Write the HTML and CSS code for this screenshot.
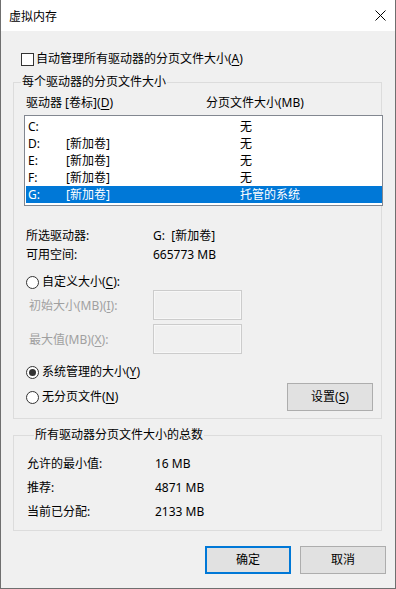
FILE: index.html
```html
<!DOCTYPE html>
<html lang="zh-CN">
<head>
    <meta charset="UTF-8">
    <meta name="viewport" content="width=device-width, initial-scale=1.0">
    <title>虚拟内存</title>
    <link rel="stylesheet" href="styles.css">
</head>
<body>
    <div class="window">
        <div class="titlebar">
            <span class="title">虚拟内存</span>
            <svg class="close" width="11" height="11" viewBox="0 0 11 11">
                <path d="M0.5 0.5 L10.5 10.5 M10.5 0.5 L0.5 10.5" stroke="#000" stroke-width="1" fill="none"/>
            </svg>
        </div>
        <div class="content">
            <div class="check-row">
                <span class="checkbox"></span>
                <span>自动管理所有驱动器的分页文件大小(<u>A</u>)</span>
            </div>

            <fieldset class="group group-drives">
                <legend>每个驱动器的分页文件大小</legend>
                <div class="list-head">
                    <span>驱动器 [卷标](<u>D</u>)</span>
                    <span>分页文件大小(MB)</span>
                </div>
                <div class="listbox">
                    <div class="list-row"><span>C:</span><span></span><span>无</span></div>
                    <div class="list-row"><span>D:</span><span>[新加卷]</span><span>无</span></div>
                    <div class="list-row"><span>E:</span><span>[新加卷]</span><span>无</span></div>
                    <div class="list-row"><span>F:</span><span>[新加卷]</span><span>无</span></div>
                    <div class="list-row selected"><span>G:</span><span>[新加卷]</span><span>托管的系统</span></div>
                </div>

                <div class="info">
                    <div class="info-row"><span>所选驱动器:</span><span>G:&nbsp;&nbsp;[新加卷]</span></div>
                    <div class="info-row"><span>可用空间:</span><span>665773 MB</span></div>
                </div>

                <div class="radio-row first">
                    <span class="radio"></span>
                    <span>自定义大小(<u>C</u>):</span>
                </div>
                <div class="size-row">
                    <span class="disabled">初始大小(MB)(<u>I</u>):</span>
                    <span class="textbox"></span>
                </div>
                <div class="size-row second">
                    <span class="disabled">最大值(MB)(<u>X</u>):</span>
                    <span class="textbox"></span>
                </div>

                <div class="radio-row managed">
                    <span class="radio checked"></span>
                    <span>系统管理的大小(<u>Y</u>)</span>
                </div>
                <div class="none-row">
                    <div class="radio-row">
                        <span class="radio"></span>
                        <span>无分页文件(<u>N</u>)</span>
                    </div>
                    <button class="btn set-btn">设置(<u>S</u>)</button>
                </div>
            </fieldset>

            <fieldset class="group group-total">
                <legend>所有驱动器分页文件大小的总数</legend>
                <div class="total-row"><span>允许的最小值:</span><span>16 MB</span></div>
                <div class="total-row"><span>推荐:</span><span>4871 MB</span></div>
                <div class="total-row"><span>当前已分配:</span><span>2133 MB</span></div>
            </fieldset>

            <div class="buttons">
                <button class="btn default">确定</button>
                <button class="btn">取消</button>
            </div>
        </div>
    </div>
</body>
</html>
```

FILE: styles.css
```css
body {
    margin: 0;
    font-family: "Noto Sans", "Noto Sans CJK SC", sans-serif;
    font-size: 12px;
    color: #000;
}
u {
    text-decoration-thickness: 1px;
    text-underline-offset: 2px;
}
.window {
    width: 396px;
    height: 589px;
    box-sizing: border-box;
    border: 1px solid #6f6f6f;
    border-top: none;
    background-color: #f0f0f0;
}
.titlebar {
    height: 31px;
    background-color: #fff;
    display: flex;
    align-items: center;
    padding-left: 8px;
}
.title {
    line-height: 16px;
    padding-top: 2px;
}
.close {
    margin-left: auto;
    margin-right: 9px;
    margin-top: 0;
}
.content {
    padding: 20px 9px 0 12px;
}
.check-row {
    display: flex;
    align-items: center;
    gap: 2px;
    height: 16px;
    line-height: 16px;
    padding-left: 8px;
}
.checkbox {
    width: 11px;
    height: 11px;
    border: 1px solid #333;
    background-color: #fff;
}
.group {
    margin: 0 4px 0 0;
    padding: 0;
    border: 1px solid #dcdcdc;
    min-inline-size: 0;
}
.group legend {
    margin-left: 7px;
    padding: 0 1px;
    line-height: 16px;
}
.group-drives {
    margin-top: 7px;
    padding-bottom: 7px;
}
.list-head {
    display: grid;
    grid-template-columns: 180px 1fr;
    padding: 5px 0 0 12px;
    line-height: 16px;
}
.listbox {
    margin: 4px 0 0 10px;
    width: 359px;
    height: 91px;
    box-sizing: border-box;
    border: 1px solid #828790;
    background-color: #fff;
    padding: 2px 0 2px 1px;
    position: relative;
}
.list-row {
    display: grid;
    grid-template-columns: 38px 174px 1fr;
    height: 17px;
    line-height: 17px;
    padding-left: 2px;
}
.list-row.selected {
    background-color: #0078d7;
    color: #fff;
}
.info {
    margin-top: 20px;
    padding-left: 12px;
}
.info-row {
    display: grid;
    grid-template-columns: 127px 1fr;
    height: 19px;
    line-height: 19px;
}
.radio-row {
    display: flex;
    align-items: center;
    gap: 3px;
    height: 16px;
    line-height: 16px;
}
.group > .radio-row {
    padding-left: 12px;
}
.radio-row.first {
    margin-top: 10px;
}
.radio-row.managed {
    margin-top: 10px;
}
.radio {
    width: 11px;
    height: 11px;
    border: 1px solid #333;
    border-radius: 50%;
    background-color: #fff;
    display: flex;
    align-items: center;
    justify-content: center;
}
.radio.checked::after {
    content: "";
    width: 7px;
    height: 7px;
    border-radius: 50%;
    background-color: #333;
}
.size-row {
    display: grid;
    grid-template-columns: 124px 89px;
    align-items: center;
    padding-left: 15px;
    height: 30px;
}
.size-row.second {
    margin-top: 4px;
}
.disabled {
    color: #a0a0a0;
    line-height: 16px;
    padding-top: 2px;
}
.textbox {
    height: 30px;
    box-sizing: border-box;
    border: 1px solid #cccccc;
    box-shadow: inset 0 0 0 1px #f7f7f7;
    background-color: #f0f0f0;
}
.none-row {
    display: flex;
    align-items: center;
    justify-content: space-between;
    margin-top: 3px;
    padding: 0 8px 0 12px;
    height: 28px;
}
.btn {
    font-family: inherit;
    font-size: 12px;
    color: #000;
    width: 86px;
    height: 28px;
    box-sizing: border-box;
    border: 1px solid #adadad;
    background-color: #e1e1e1;
    padding: 0;
    line-height: 16px;
}
.btn.default {
    border: 2px solid #0078d7;
}
.group-total {
    margin-top: 8px;
    padding: 9px 0 6px 13px;
}
.total-row {
    display: grid;
    grid-template-columns: 128px 1fr;
    height: 24px;
    line-height: 24px;
}
.buttons {
    display: flex;
    justify-content: flex-end;
    gap: 9px;
    margin-top: 15px;
}
```
